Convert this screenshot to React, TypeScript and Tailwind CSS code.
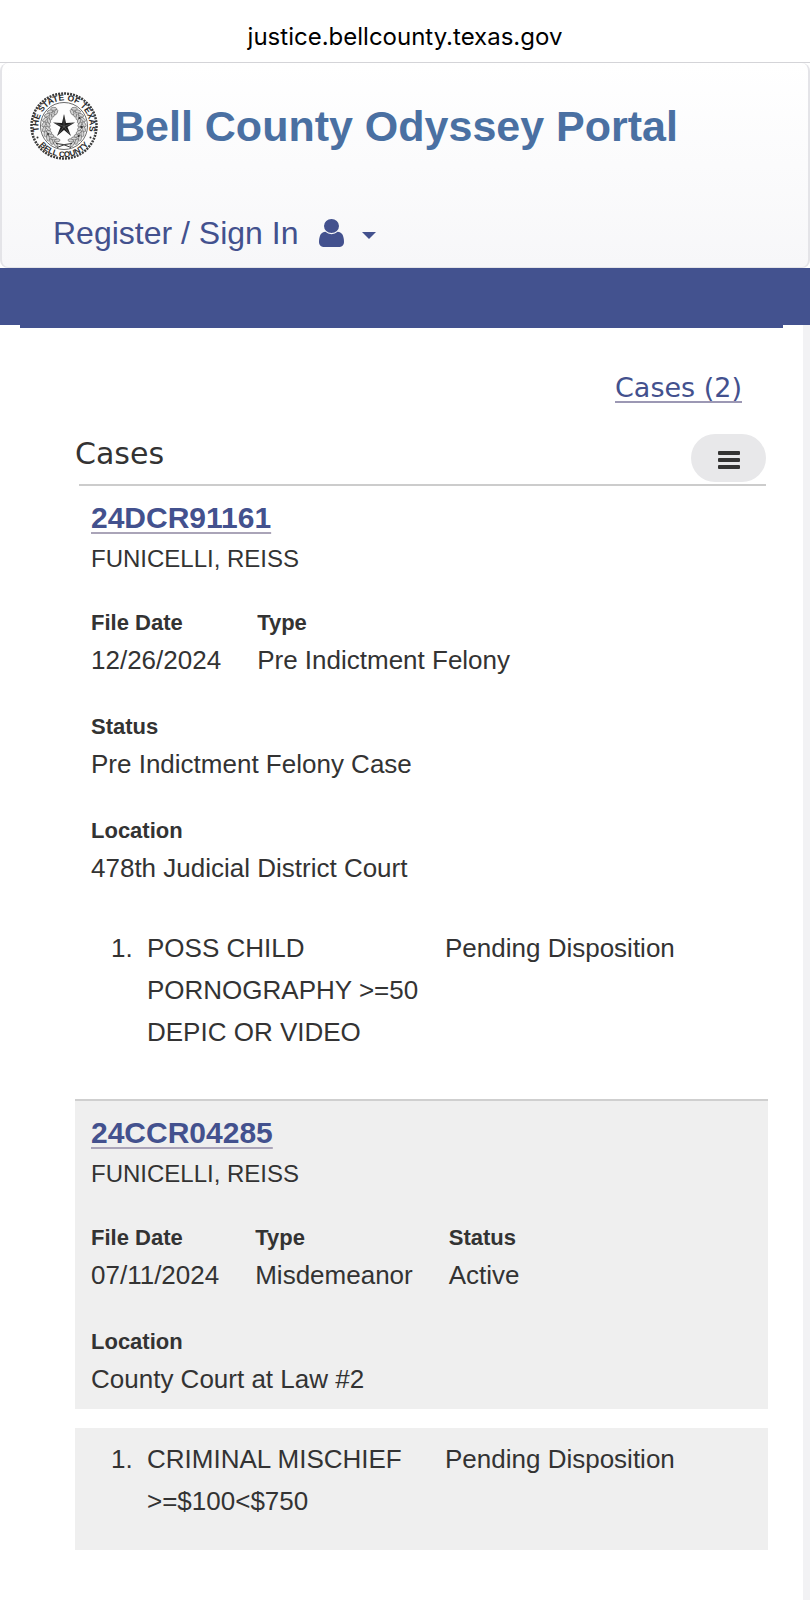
type Field = { label: string; value: string };

type CourtCase = {
  number: string;
  party: string;
  fields: Field[];
  charges: { text: string; disposition: string }[];
  shaded?: boolean;
};

const cases: CourtCase[] = [
  {
    number: "24DCR91161",
    party: "FUNICELLI, REISS",
    fields: [
      { label: "File Date", value: "12/26/2024" },
      { label: "Type", value: "Pre Indictment Felony" },
      { label: "Status", value: "Pre Indictment Felony Case" },
      { label: "Location", value: "478th Judicial District Court" },
    ],
    charges: [
      {
        text: "POSS CHILD PORNOGRAPHY >=50 DEPIC OR VIDEO",
        disposition: "Pending Disposition",
      },
    ],
  },
  {
    number: "24CCR04285",
    party: "FUNICELLI, REISS",
    fields: [
      { label: "File Date", value: "07/11/2024" },
      { label: "Type", value: "Misdemeanor" },
      { label: "Status", value: "Active" },
      { label: "Location", value: "County Court at Law #2" },
    ],
    charges: [
      {
        text: "CRIMINAL MISCHIEF >=$100<$750",
        disposition: "Pending Disposition",
      },
    ],
    shaded: true,
  },
];

// angle (degrees from the bottom) of each leaf pair in the wreath
const leaves = [22, 36, 50, 64, 78, 92, 106, 120, 134, 146];

function Seal() {
  return (
    <svg viewBox="0 0 136 136" className="size-[68px] shrink-0" role="img" aria-label="Bell County seal">
      <defs>
        <path id="seal-top" d="M 32 104 A 51 51 0 1 1 104 104" />
        <path id="seal-bottom" d="M 6 68 A 62 62 0 0 0 130 68" />
      </defs>
      <circle cx="68" cy="68" r="67" fill="#fdfdfd" />
      <circle cx="68" cy="68" r="65" fill="none" stroke="#3c3c3c" strokeWidth="5" strokeDasharray="4 2" />
      <circle cx="68" cy="68" r="47" fill="none" stroke="#6b6b6b" strokeWidth="2" />
      <g fontSize="17" fontWeight="bold" fill="#2a2a2a" className="font-['Liberation_Sans',sans-serif]">
        <text>
          <textPath href="#seal-top" startOffset="50%" textAnchor="middle">
            THE STATE OF TEXAS
          </textPath>
        </text>
        <text fontSize="16">
          <textPath href="#seal-bottom" startOffset="50%" textAnchor="middle">
            BELL COUNTY
          </textPath>
        </text>
      </g>
      <circle cx="15" cy="91" r="2" fill="#333" />
      <circle cx="121" cy="91" r="2" fill="#333" />
      <g fill="#d2d2d2" stroke="#5a5a5a" strokeWidth="1.200">
        {leaves.map((a) => (
          <g key={a}>
            <g transform={`rotate(${a} 68 68)`}>
              <ellipse cx="66" cy="108" rx="6" ry="3" transform="rotate(32 66 108)" />
              <ellipse cx="66" cy="100" rx="6" ry="3" transform="rotate(-32 66 100)" />
            </g>
            <g transform={`rotate(${-a} 68 68)`}>
              <ellipse cx="70" cy="108" rx="6" ry="3" transform="rotate(-32 70 108)" />
              <ellipse cx="70" cy="100" rx="6" ry="3" transform="rotate(32 70 100)" />
            </g>
          </g>
        ))}
      </g>
      <g fill="#2f2f2f">
        <circle cx="103" cy="70" r="2.500" />
        <circle cx="99" cy="52" r="2" />
        <circle cx="97" cy="88" r="2" />
        <circle cx="36" cy="84" r="2" />
      </g>
      <path d="M52 103q14 0 30 8M84 103q-14 0-30 8" fill="none" stroke="#333" strokeWidth="2" />
      <path
        d="M68 44L72 62L90 61L75 70L82 88L68 76L54 88L61 70L46 61L64 62Z"
        fill="#1d1d1d"
      />
      <path d="M68 69V47M68 69l18-7M68 69l11 15M68 69l-11 15M68 69l-18-7" stroke="#777" strokeWidth="1" />
    </svg>
  );
}

function UserIcon() {
  return (
    <svg viewBox="256 128 1280 1536" preserveAspectRatio="none" className="h-7 w-[25px]" fill="currentColor" aria-hidden="true">
      <path d="M1536 1399q0 109-62.500 187t-150.500 78h-854q-88 0-150.500-78t-62.500-187q0-85 8.500-160.500t31.500-152 58.500-131 94-89 134.500-34.500q131 128 313 128t313-128q76 0 134.500 34.500t94 89 58.500 131 31.500 152 8.500 160.500zm-256-887q0 159-112.500 271.500t-271.500 112.500-271.500-112.500-112.500-271.500 112.500-271.500 271.500-112.500 271.500 112.500 112.500 271.500z" />
    </svg>
  );
}

function CaseCard({ item }: { item: CourtCase }) {
  const bg = item.shaded ? "bg-[#efefef]" : "bg-transparent";

  return (
    <article className="mb-[18px]">
      <div
        className={`border-t-2 px-4 pt-3 pb-[10px] ${bg} ${
          item.shaded ? "border-[#cfcfcf]" : "border-transparent"
        }`}
      >
        <h3 className="text-[30px] leading-[40px] font-bold">
          <a
            href="#case"
            className="text-[#43518e] underline decoration-[#aaa4b8] decoration-2 underline-offset-4 [text-decoration-skip-ink:none]"
          >
            {item.number}
          </a>
        </h3>
        <p className="text-[24px] leading-[42px]">{item.party}</p>
        <dl className="mt-[26px] flex flex-wrap gap-x-9 gap-y-[30px]">
          {item.fields.map((f) => (
            <div key={f.label}>
              <dt className="text-[22px] leading-[34px] font-bold">{f.label}</dt>
              <dd className="text-[26px] leading-[40px]">{f.value}</dd>
            </div>
          ))}
        </dl>
      </div>
      <ol className={`mt-[19px] pt-[10px] pb-7 pl-9 text-[26px] leading-[42px] ${bg}`}>
        {item.charges.map((c, i) => (
          <li key={c.text} className="grid grid-cols-[36px_298px_1fr]">
            <span>{i + 1}.</span>
            <span className="pr-5">{c.text}</span>
            <span>{c.disposition}</span>
          </li>
        ))}
      </ol>
    </article>
  );
}

export default function App() {
  return (
    <div className="min-h-screen bg-white font-['Liberation_Sans',Arial,sans-serif] text-[#333]">
      <div className="flex h-[63px] items-center justify-center border-b border-[#d4d4d8] pt-[11px] font-['Inter',sans-serif] text-[24px] text-black">
        justice.bellcounty.texas.gov
      </div>

      <header className="rounded-lg border-x-2 border-b border-[#e4e4e8] bg-linear-to-b from-white to-[#f7f7f9] pt-[29px] pb-[10px]">
        <div className="flex items-center gap-4 pl-7">
          <Seal />
          <h1 className="text-[43px] leading-[50px] font-bold text-[#4a70a2]">Bell County Odyssey Portal</h1>
        </div>
        <button
          type="button"
          className="mt-[49px] ml-[51px] flex items-center text-[32px] leading-[48px] text-[#43518e]"
        >
          Register / Sign In
          <span className="ml-[21px]">
            <UserIcon />
          </span>
          <svg viewBox="0 0 14 7" className="mt-1 ml-[18px] h-[7px] w-[14px]" fill="currentColor" aria-hidden="true">
            <path d="M0 0h14L7 7z" />
          </svg>
        </button>
      </header>

      <div className="h-[57px] bg-[#43528f]" />

      <main className="min-h-[1275px] border-r-[7px] border-[#f2f2f4]">
        <div className="mx-5 h-[3px] bg-[#43528f]" />
        <div className="pr-[35px] pl-[75px]">
          <nav className="flex justify-end pt-10 pr-[26px] font-['DejaVu_Sans',Verdana,sans-serif]">
            <a
              href="#cases"
              className="text-[27px] leading-[40px] text-[#43518e] underline decoration-[#9c98b4] decoration-2 underline-offset-4"
            >
              Cases (2)
            </a>
          </nav>

          <div className="mr-[2px] ml-1 flex items-end justify-between border-b-2 border-[#cccccc] pt-[22px] pb-[2px]" id="cases">
            <h2 className="-ml-1 pb-1 font-['DejaVu_Sans',Verdana,sans-serif] text-[30px] leading-[48px]">Cases</h2>
            <button
              type="button"
              aria-label="Cases menu"
              className="flex h-12 w-[75px] items-center justify-center rounded-full bg-[#e8e8ea] text-[#333]"
            >
              <svg viewBox="0 0 22 18" className="mt-1 h-[18px] w-[22px]" fill="currentColor" aria-hidden="true">
                <rect width="22" height="4" rx="1" />
                <rect y="7" width="22" height="4" rx="1" />
                <rect y="14" width="22" height="4" rx="1" />
              </svg>
            </button>
          </div>

          <div className="-mt-[2px]">
            {cases.map((c) => (
              <CaseCard key={c.number} item={c} />
            ))}
          </div>
        </div>
      </main>
    </div>
  );
}
